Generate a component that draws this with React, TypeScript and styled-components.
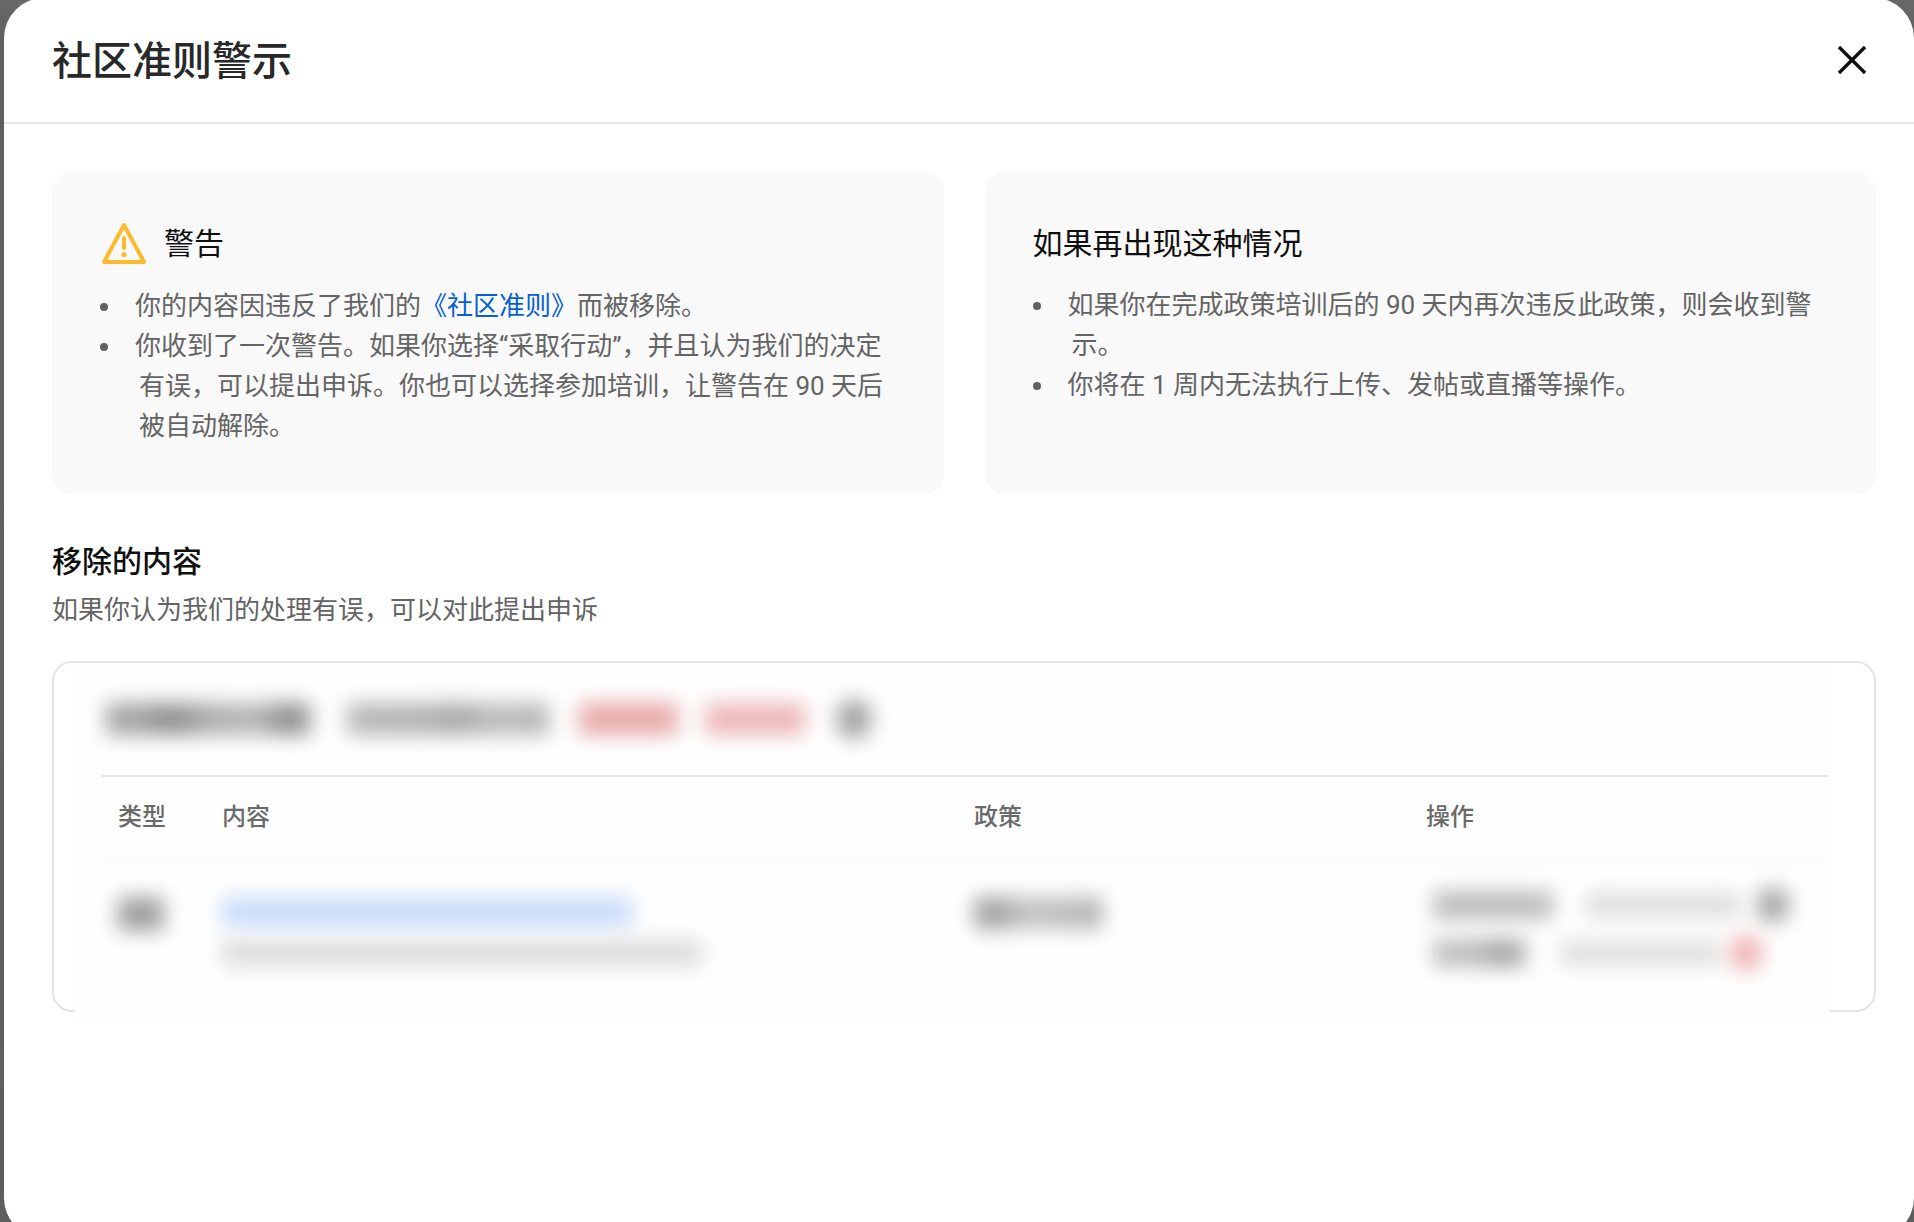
import React from "react";
import styled, { createGlobalStyle } from "styled-components";

const Global = createGlobalStyle`
  html, body { margin: 0; padding: 0; height: 1222px; overflow: hidden; background: linear-gradient(#696969 0, #5f5f5f 40px, #5e5e5e 100%); }
  * { box-sizing: border-box; }
  body { font-family: Roboto, "Noto Sans CJK SC", sans-serif; }
`;

const Dialog = styled.div`
  margin: -2px 0 0 4px;
  height: 1240px;
  background: #fff;
  border-radius: 40px;
  overflow: hidden;
`;

const Header = styled.header`
  height: 126px;
  display: flex;
  align-items: center;
  justify-content: space-between;
  padding: 0 48px 0 48px;
  border-bottom: 2px solid #e5e5e5;
`;

const Title = styled.h1`
  margin: 4px 0 0;
  font-size: 40px;
  line-height: 56px;
  font-weight: 500;
  color: #282828;
`;

const CloseButton = styled.button`
  width: 28px;
  height: 28px;
  padding: 0;
  border: 0;
  background: none;
  display: block;
`;

const Content = styled.main`
  padding: 48px 38px 0 48px;
`;

const Cards = styled.div`
  display: grid;
  grid-template-columns: 1fr 1fr;
  gap: 41px;
`;

const Card = styled.section`
  height: 322px;
  padding: 52px 50px 0 48px;
  background: #f9f9f9;
  border-radius: 20px;
`;

const CardHead = styled.div`
  display: flex;
  align-items: center;
  gap: 18px;
  height: 40px;
`;

const WarnIcon = styled.svg`
  width: 44px;
  height: 44px;
  margin-left: 2px;
  flex: none;
`;

const CardTitle = styled.h2`
  margin: 0;
  font-size: 30px;
  line-height: 40px;
  font-weight: 400;
  color: #0f0f0f;
`;

const Bullets = styled.ul<{ $top: number }>`
  list-style: none;
  margin: ${(p) => p.$top}px 0 0;
  padding: 0;
`;

const Bullet = styled.li`
  position: relative;
  padding-left: 39px;
  text-indent: -4px;
  font-size: 26px;
  line-height: 40px;
  color: #646464;

  &::before {
    content: "";
    position: absolute;
    left: 0;
    top: 17px;
    width: 8px;
    height: 8px;
    border-radius: 50%;
    background: #606060;
  }
`;

const Link = styled.a`
  color: #065fd4;
  text-decoration: none;
`;

const SectionTitle = styled.h2`
  margin: 48px 0 8px;
  font-size: 30px;
  line-height: 40px;
  font-weight: 500;
  color: #0f0f0f;
`;

const SectionSub = styled.p`
  margin: 0 0 31px;
  font-size: 26px;
  line-height: 40px;
  color: #646464;
`;

const TableCard = styled.section`
  height: 351px;
  border: 2px solid #e5e5e5;
  border-radius: 20px;
`;

const TableVeil = styled.div`
  height: 356px;
  margin: 0 44px 0 21px;
  padding: 0 3px 0 27px;
  background: #fefefe;
`;

const Strip = styled.div`
  display: flex;
  align-items: center;
  height: 85px;
  padding: 27px 0 0 2px;
`;

const Divider = styled.div`
  height: 2px;
  margin-top: 27px;
  background: #e5e5e5;
`;

const grid = `
  display: grid;
  grid-template-columns: 104px 752px 452px 1fr;
`;

const HeadRow = styled.div`
  ${grid}
  padding-left: 16px;
  margin-top: 20px;
  font-size: 24px;
  line-height: 40px;
  font-weight: 500;
  color: #6a6a6a;
`;

const Band = styled.div`
  height: 20px;
  margin-top: 11px;
  background: #fcfcfc;
  filter: blur(2px);
`;

const BodyRow = styled.div`
  ${grid}
  padding-left: 16px;
`;

const Cell = styled.div<{ $top: number }>`
  padding-top: ${(p) => p.$top}px;
`;

const ActionLine = styled.div<{ $gap?: number }>`
  display: flex;
  align-items: center;
  height: 40px;
  margin-top: ${(p) => p.$gap ?? 0}px;
`;

const Smudge = styled.div<{ $w: number; $h: number; $c: string; $ml?: number; $mt?: number; $round?: boolean }>`
  width: ${(p) => p.$w}px;
  height: ${(p) => p.$h}px;
  margin-left: ${(p) => p.$ml ?? 0}px;
  margin-top: ${(p) => p.$mt ?? 0}px;
  background: ${(p) => p.$c};
  border-radius: ${(p) => (p.$round ? "50%" : "4px")};
  filter: blur(10px);
  flex: none;
`;

export default function App() {
  return (
    <>
      <Global />
      <Dialog lang="zh-CN">
        <Header>
          <Title>社区准则警示</Title>
          <CloseButton aria-label="关闭">
            <svg width="28" height="28" viewBox="0 0 28 28" fill="none" stroke="#0f0f0f" strokeWidth="3.4">
              <path d="M1 1L27 27M27 1L1 27" />
            </svg>
          </CloseButton>
        </Header>
        <Content>
          <Cards>
            <Card>
              <CardHead>
                <WarnIcon viewBox="0 0 44 44" fill="none">
                  <path d="M22 3L42 40H2Z" stroke="#ffb92c" strokeWidth="4" strokeLinejoin="round" />
                  <path d="M22 16V26" stroke="#ffb92c" strokeWidth="4" strokeLinecap="round" />
                  <circle cx="22" cy="32.5" r="2.6" fill="#ffb92c" />
                </WarnIcon>
                <CardTitle>警告</CardTitle>
              </CardHead>
              <Bullets $top={22}>
                <Bullet>
                  你的内容因违反了我们的<Link>《社区准则》</Link>而被移除。
                </Bullet>
                <Bullet>
                  你收到了一次警告。如果你选择“采取行动”，并且认为我们的决定有误，可以提出申诉。你也可以选择参加培训，让警告在 90 天后被自动解除。
                </Bullet>
              </Bullets>
            </Card>
            <Card>
              <CardHead>
                <CardTitle>如果再出现这种情况</CardTitle>
              </CardHead>
              <Bullets $top={21}>
                <Bullet>如果你在完成政策培训后的 90 天内再次违反此政策，则会收到警示。</Bullet>
                <Bullet>你将在 1 周内无法执行上传、发帖或直播等操作。</Bullet>
              </Bullets>
            </Card>
          </Cards>
          <SectionTitle>移除的内容</SectionTitle>
          <SectionSub>如果你认为我们的处理有误，可以对此提出申诉</SectionSub>
          <TableCard>
            <TableVeil>
              <Strip>
                <Smudge $w={205} $h={32} $c="linear-gradient(90deg,#a6a6a6,#a4a4a4 15%,#8c8c8c 32%,#acacac 50%,#b8b8b8 72%,#8a8a8a 90%,#a2a2a2)" $ml={2} />
                <Smudge $w={202} $h={32} $c="linear-gradient(90deg,#b8b8b8,#b4b4b4 35%,#a8a8a8 55%,#bebebe 75%,#b4b4b4)" $ml={36} />
                <Smudge $w={99} $h={32} $c="#e8aaaa" $ml={30} />
                <Smudge $w={100} $h={32} $c="#edb8b8" $ml={27} />
                <Smudge $w={36} $h={40} $c="#a4a4a4" $ml={31} $round />
              </Strip>
              <Divider />
              <HeadRow>
                <span>类型</span>
                <span>内容</span>
                <span>政策</span>
                <span>操作</span>
              </HeadRow>
              <Band />
              <BodyRow>
                <Cell $top={29}>
                  <Smudge $w={46} $h={34} $c="#a0a0a0" />
                </Cell>
                <Cell $top={29}>
                  <Smudge $w={410} $h={30} $c="#c8dcf8" />
                  <Smudge $w={480} $h={26} $c="#dcdcdc" $mt={13} />
                </Cell>
                <Cell $top={29}>
                  <Smudge $w={128} $h={32} $c="linear-gradient(90deg,#a4a4a4,#a4a4a4 20%,#c4c4c4 40%,#bcbcbc 80%,#acacac)" />
                </Cell>
                <Cell $top={17}>
                  <ActionLine>
                    <Smudge $w={120} $h={28} $c="#bcbcbc" $ml={7} />
                    <Smudge $w={154} $h={24} $c="#dcdcdc" $ml={33} />
                    <Smudge $w={34} $h={36} $c="#a8a8a8" $ml={16} $round />
                  </ActionLine>
                  <ActionLine $gap={8}>
                    <Smudge $w={93} $h={28} $c="linear-gradient(90deg,#c0c0c0,#bcbcbc 50%,#a2a2a2 70%,#b4b4b4)" $ml={7} />
                    <Smudge $w={160} $h={24} $c="#dedede" $ml={34} />
                    <Smudge $w={34} $h={36} $c="#f0b4b4" $ml={9} $round />
                  </ActionLine>
                </Cell>
              </BodyRow>
            </TableVeil>
          </TableCard>
        </Content>
      </Dialog>
    </>
  );
}
